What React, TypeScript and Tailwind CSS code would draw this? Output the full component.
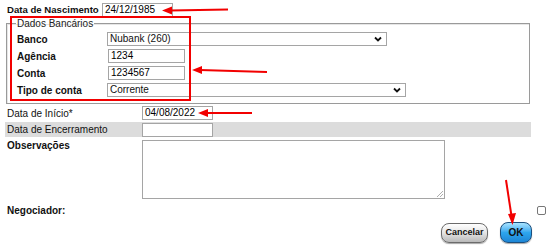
import React from "react";

const Chevron = () => (
  <svg width="8" height="6" viewBox="0 0 8 6" className="shrink-0">
    <polyline points="1,1.5 4,4.5 7,1.5" fill="none" stroke="#111" strokeWidth="1.8" />
  </svg>
);

const TextBox = ({ value, w }: { value?: string; w: string }) => (
  <div
    className={`${w} h-[14px] shrink-0 border border-[#a5a5a5] bg-white pl-[2px] leading-[12px] text-black`}
  >
    {value}
  </div>
);

const SelectBox = ({ value, w }: { value: string; w: string }) => (
  <div
    className={`${w} h-[14px] shrink-0 border border-[#a5a5a5] bg-white pl-[2px] pr-[4px] leading-[12px] flex items-center justify-between`}
  >
    <span>{value}</span>
    <Chevron />
  </div>
);

const App = () => {
  return (
    <div
      className="relative w-[550px] h-[246px] bg-white text-[10px] text-[#111] overflow-hidden whitespace-nowrap"
      style={{ fontFamily: '"Liberation Sans", Arial, sans-serif' }}
    >
      <div className="pt-[3px]">
        {/* Data de Nascimento */}
        <div className="flex items-center h-[14px] pl-[7px]">
          <span className="w-[95px] shrink-0 font-bold text-[9.6px]">Data de Nascimento</span>
          <TextBox value="24/12/1985" w="w-[71px]" />
        </div>

        {/* Dados Bancários */}
        <fieldset className="ml-[6px] w-[524px] mt-[1px] border border-[#9a9a9a] shadow-[inset_1px_1px_0_#e6e6e6] pb-[6px] pt-[3px]">
          <legend className="ml-[9px] px-px leading-[11px] text-[#222]">Dados Bancários</legend>
          <div className="flex flex-col gap-[3px] pl-[10px]">
            <div className="flex items-center h-[14px]">
              <span className="w-[90px] shrink-0 font-bold">Banco</span>
              <SelectBox value="Nubank (260)" w="w-[280px]" />
            </div>
            <div className="flex items-center h-[14px]">
              <span className="w-[91px] shrink-0 font-bold">Agência</span>
              <TextBox value="1234" w="w-[77px]" />
            </div>
            <div className="flex items-center h-[14px]">
              <span className="w-[91px] shrink-0 font-bold">Conta</span>
              <TextBox value="1234567" w="w-[77px]" />
            </div>
            <div className="flex items-center h-[14px]">
              <span className="w-[90px] shrink-0 font-bold">Tipo de conta</span>
              <SelectBox value="Corrente" w="w-[299px]" />
            </div>
          </div>
        </fieldset>

        <div className="pl-[5px] w-[531px]">
          <div className="flex items-center h-[14px] mt-[2px] pl-[2px]">
            <span className="w-[135px] shrink-0">Data de Início*</span>
            <TextBox value="04/08/2022" w="w-[71px]" />
          </div>
          <div className="flex items-center h-[15px] mt-[2px] pl-[2px] bg-[#dcdcdc]">
            <span className="w-[135px] shrink-0">Data de Encerramento</span>
            <TextBox w="w-[71px]" />
          </div>
          <div className="flex items-start mt-[3px] pl-[2px]">
            <span className="w-[135px] shrink-0 font-bold leading-[12px]">Observações</span>
            <div className="relative w-[303px] h-[59px] border border-[#a5a5a5] bg-white">
              <svg width="7" height="7" viewBox="0 0 7 7" className="absolute right-[1px] bottom-[1px]">
                <line x1="1" y1="7" x2="7" y2="1" stroke="#999" strokeWidth="0.8" />
                <line x1="4" y1="7" x2="7" y2="4" stroke="#999" strokeWidth="0.8" />
              </svg>
            </div>
          </div>
        </div>

        <div className="flex items-center justify-between pl-[7px] w-[546px] h-[12px] mt-[5px]">
          <span className="font-bold">Negociador:</span>
          <div className="w-[9px] h-[9px] rounded-[2px] border border-[#777] bg-white" />
        </div>

        <div className="flex items-center justify-end gap-[12px] w-[532px] mt-[6px]">
          <button className="w-[47px] h-[20px] rounded-[8px] border border-[#6b6b6b] bg-linear-to-b from-[#ffffff] via-[#e4e4e4] to-[#b9b9b9] shadow-[0_1px_1px_rgba(0,0,0,0.35)] text-[9px] font-bold text-[#111] leading-none">
            Cancelar
          </button>
          <button className="w-[32px] h-[21px] rounded-[8px] border border-[#1b4f7e] bg-linear-to-b from-[#a8e4ff] via-[#2ea6ee] to-[#1e86d6] shadow-[0_1px_1px_rgba(0,0,0,0.35)] text-[10px] font-bold text-[#111] leading-none">
            OK
          </button>
        </div>
      </div>

      {/* annotations */}
      <div className="absolute left-[10px] top-[16px] w-[181px] h-[85px] border-2 border-[#f20000] pointer-events-none" />
      <svg width="550" height="246" className="absolute inset-0 pointer-events-none">
        <g stroke="#f20000" strokeWidth="2" fill="#f20000">
          <line x1="228" y1="9.5" x2="170" y2="10.5" />
          <polygon points="162,10.5 172,6.5 172,14.5" stroke="none" />
          <line x1="267" y1="72" x2="200" y2="70" />
          <polygon points="192,70 202,66 202,74" stroke="none" />
          <line x1="252" y1="113" x2="206" y2="113" />
          <polygon points="198,113 208,109 208,117" stroke="none" />
          <line x1="506" y1="180" x2="511.5" y2="216" />
          <polygon points="512.5,225 508,214 516,213" stroke="none" />
        </g>
      </svg>
    </div>
  );
};

export default App;
